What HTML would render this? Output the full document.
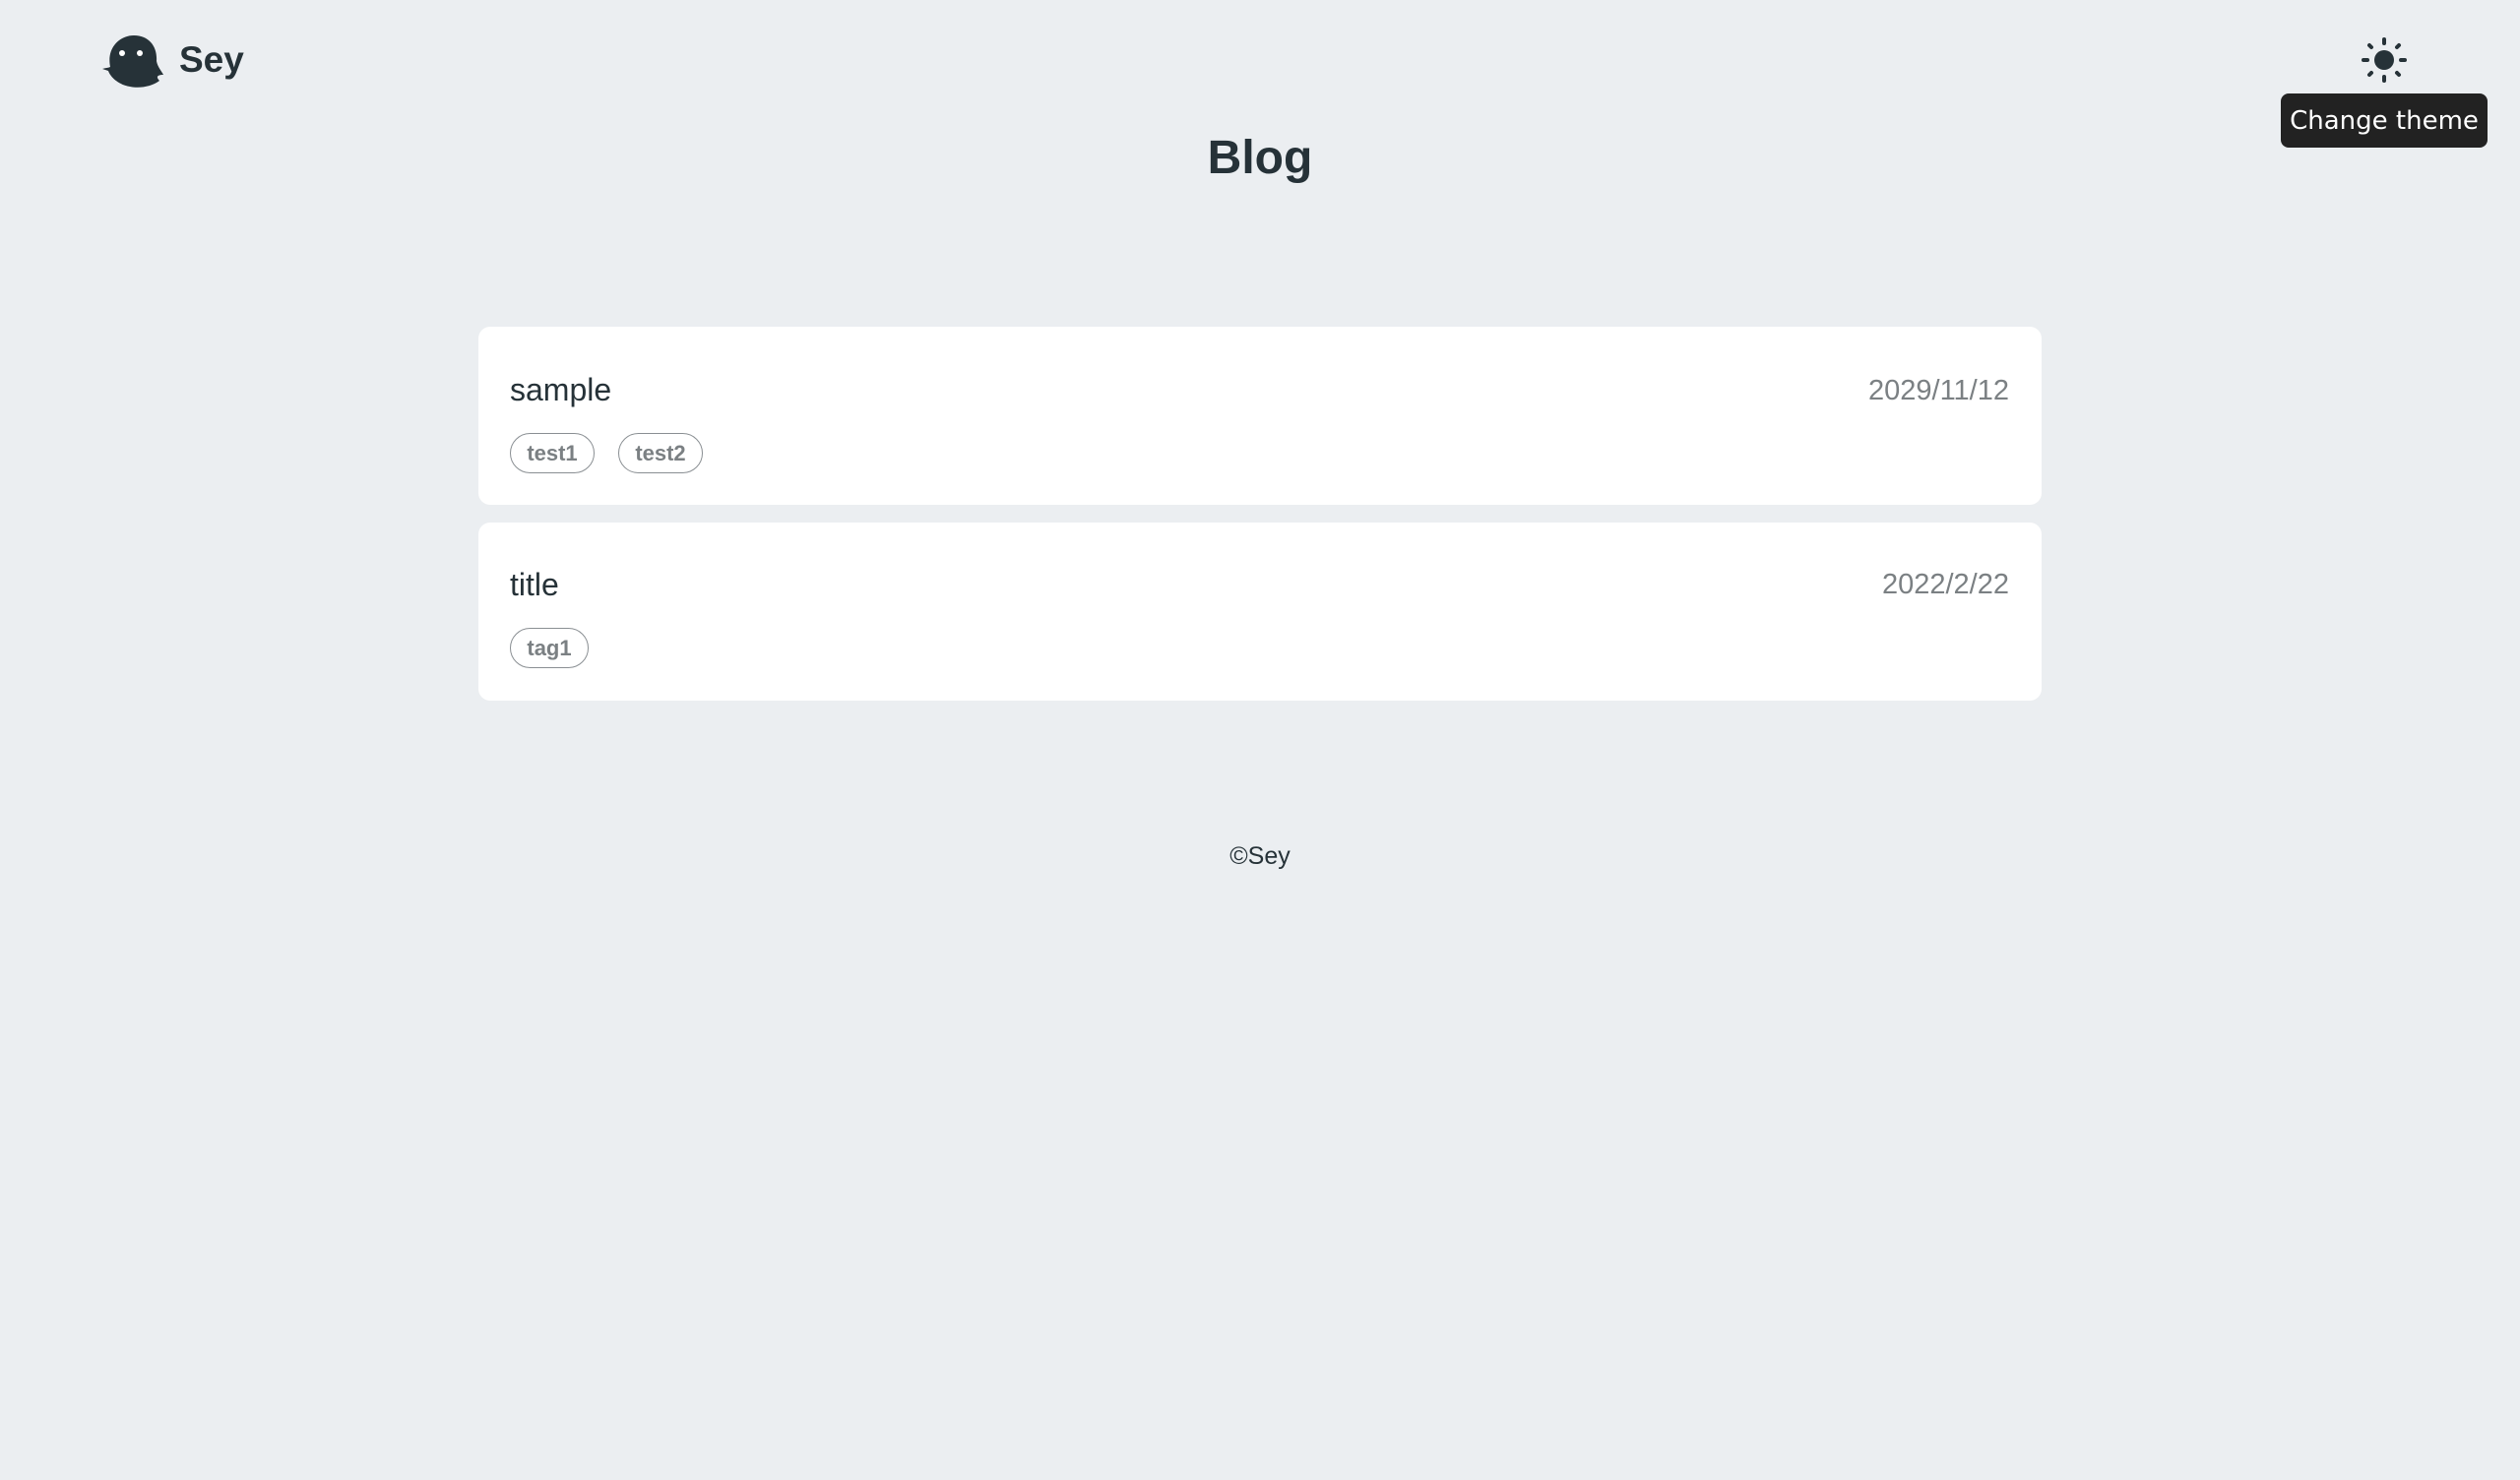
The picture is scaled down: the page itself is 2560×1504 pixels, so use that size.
<!DOCTYPE html>
<html><head><meta charset="utf-8"><style>
html,body{margin:0;padding:0;}
body{width:2560px;height:1504px;background:#ebeef1;font-family:"Liberation Sans",sans-serif;color:#263238;position:relative;overflow:hidden;}
.abs{position:absolute;}
.card{position:absolute;left:486px;width:1588px;background:#fff;border-radius:12px;}
.title{position:absolute;left:32px;font-size:32px;color:#263238;}
.date{position:absolute;right:33px;font-size:29px;color:#7b8083;}
.tag{position:absolute;height:39px;border:1.5px solid #8a8f93;border-radius:22px;font-weight:bold;font-size:22px;color:#7b8083;line-height:39px;text-align:center;box-sizing:content-box;}
</style></head><body>
<svg class="abs" style="left:102px;top:34px" width="66" height="56" viewBox="0 0 66 56">
<path d="M10 34 C6 14 20 2 34 2 C50 2 58 14 57 28 C58 34 62 38 64 42 C58 42 56 44 60 48 C52 54 40 56 30 54 C18 52 10 44 8 38 L2 36 C5 35 8 35 10 34 Z" fill="#263238"/>
<circle cx="22" cy="20" r="3" fill="#fff"/><circle cx="40" cy="20" r="3" fill="#fff"/>
</svg>
<div class="abs" style="left:182px;top:40px;font-size:37px;font-weight:bold;">Sey</div>
<svg class="abs" style="left:2398px;top:37px" width="48" height="48" viewBox="0 0 48 48">
<circle cx="24" cy="24" r="10" fill="#263238"/>
<g stroke="#263238" stroke-width="4" stroke-linecap="round">
<line x1="24" y1="3" x2="24" y2="7"/><line x1="24" y1="41" x2="24" y2="45"/>
<line x1="3" y1="24" x2="7" y2="24"/><line x1="41" y1="24" x2="45" y2="24"/>
<line x1="9" y1="9" x2="11" y2="11"/><line x1="37" y1="37" x2="39" y2="39"/>
<line x1="9" y1="39" x2="11" y2="37"/><line x1="37" y1="11" x2="39" y2="9"/>
</g></svg>
<div class="abs" style="left:2317px;top:95px;width:210px;height:55px;background:#222;border-radius:8px;color:#fff;font-family:'DejaVu Sans',sans-serif;font-size:26px;line-height:56px;text-align:center;">Change theme</div>
<div class="abs" style="left:0;width:2560px;top:133px;text-align:center;font-size:48px;font-weight:bold;">Blog</div>
<div class="card" style="top:332px;height:181px;">
<div class="title" style="top:46px;">sample</div>
<div class="date" style="top:49px;">2029/11/12</div>
<div class="tag" style="left:32px;top:108px;width:84px;">test1</div>
<div class="tag" style="left:142px;top:108px;width:84px;">test2</div>
</div>
<div class="card" style="top:531px;height:181px;">
<div class="title" style="top:45px;">title</div>
<div class="date" style="top:47px;">2022/2/22</div>
<div class="tag" style="left:32px;top:107px;width:78px;">tag1</div>
</div>
<div class="abs" style="left:0;width:2560px;top:856px;text-align:center;font-size:25px;">©Sey</div>
</body></html>
